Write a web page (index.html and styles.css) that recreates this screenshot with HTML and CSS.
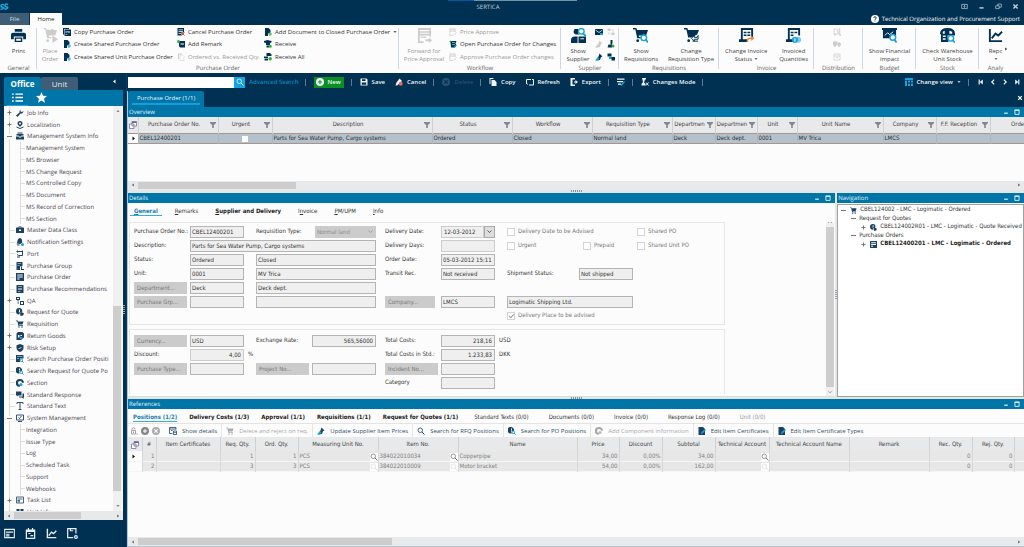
FILE: index.html
```html
<!DOCTYPE html>
<html lang="en">
<head>
    <meta charset="UTF-8">
    <meta name="viewport" content="width=device-width, initial-scale=1.0">
    <title>SERTICA</title>
    <link rel="stylesheet" href="styles.css">
</head>
<body>
    <!-- icon sprite -->
    <svg class="sprite" aria-hidden="true">
        <symbol id="logo" viewBox="0 0 18 16"><path d="M8 4Q3 2 2 5t4 4-5 4M16 3q-5-2-6 1t4 4-5 5" fill="none" stroke="#18a5d8" stroke-width="3"/></symbol>
        <symbol id="print" viewBox="0 0 16 16"><path d="M4 1h8v3H4zM2 5h12a2 2 0 0 1 2 2v5h-3V9H3v3H0V7a2 2 0 0 1 2-2z"/><path d="M4 10h8v5H4zm1.500 1.500v2h5v-2z" fill-rule="evenodd"/></symbol>
        <symbol id="cart" viewBox="0 0 16 16"><path d="M0 1h3.500l.8 2H15l-2 6H6l.4 1.500H14V12H5L2.500 2.500H0z"/><circle cx="6" cy="14" r="1.500"/><circle cx="12" cy="14" r="1.500"/></symbol>
        <symbol id="cartgo" viewBox="0 0 16 16"><path d="M0 0h3l.8 2H6v2l2 2 2-2h-1V1h2v3h-1l-2 2M13 2h2l-2 6H6l.4 1.500H9V11H4.500L2.500 1.500H0z"/><path d="M5 3h9l-1.500 4H6z"/><circle cx="5" cy="13.500" r="1.500"/><path d="M10 8l6 4-6 4z"/></symbol>
        <symbol id="copydoc" viewBox="0 0 16 16"><path d="M0 0h12v2H2v11H0z"/><path d="M3 3h13v13H3zm2 3v1h9V6zm0 3v1h4V9zm5 0v1h4V9zm-5 3v1h4v-1z" fill-rule="evenodd"/></symbol>
        <symbol id="docadd" viewBox="0 0 16 16"><path d="M2 0h7l4 4v5l-5 2v5H2z"/><path d="M9 11h2V9h2v2h3v2h-3v3h-2v-3H9z" class="acc"/></symbol>
        <symbol id="docedit" viewBox="0 0 16 16"><path d="M1 0h9l4 4v12H1z"/><path d="M6 14l1-4 7-6 2 2-7 7z" class="acc"/></symbol>
        <symbol id="doccancel" viewBox="0 0 16 16"><path d="M1 0h13v9H9v6H1zm2 3v1.500h9V3zm0 3v1.500h9V6zm0 4v1.500h5V10z" fill-rule="evenodd"/><path d="M9 9l6 6M15 9l-6 6" stroke="#e8483f" stroke-width="2"/></symbol>
        <symbol id="remark" viewBox="0 0 16 16"><path d="M4 2h12v13H6l-2-3zm3 4v1h7V6zm0 3v1h7V9z" fill-rule="evenodd"/><circle cx="3" cy="3" r="3" fill="#2fae3a"/></symbol>
        <symbol id="docs" viewBox="0 0 16 16"><path d="M2 1h8v2H4v9H2z"/><path d="M6 4h5l3 3v8H6z" fill="none" stroke="currentColor"/></symbol>
        <symbol id="docgreen" viewBox="0 0 16 16"><path d="M2 0h7l4 4v5l-5 2v5H2z"/><path d="M9 11h2V9h2v2h3v2h-3v3h-2v-3H9z" fill="#2fae3a"/></symbol>
        <symbol id="receive" viewBox="0 0 16 16"><path d="M0 2l7-2 8 2v3l-3 1v4H4V6L0 5zM5 11h5v4H5z"/><circle cx="12.500" cy="12.500" r="3" fill="#2fae3a"/></symbol>
        <symbol id="receiveall" viewBox="0 0 16 16"><path d="M5 0h7l3 3v3H5zM0 7h8v3H0zM1 11h7v4H1z"/><circle cx="12.500" cy="11.500" r="3.500" fill="#2fae3a"/></symbol>
        <symbol id="forward" viewBox="0 0 16 16"><path d="M1 0h14v9h-2V8H3v6h4v2H1zm2 2v1.500h10V2zm0 3v1h10V5z" fill-rule="evenodd"/><path d="M4 9h6v1.500H4zM9 12h4v-2l3 3-3 3v-2H9z"/></symbol>
        <symbol id="approve" viewBox="0 0 16 16"><path d="M1 1h12v8h-1.500V7h-9v7H8v1.500H1zm1.500 2v2h9V3z" fill-rule="evenodd"/><path d="M9 12l2 2 4-5" fill="none" stroke="currentColor" stroke-width="1.500"/></symbol>
        <symbol id="openchg" viewBox="0 0 16 16"><path d="M3 2h12l-2 5 2 4-3 4H4zm3 3v1h6V5zm0 3v1h6V8z" fill-rule="evenodd"/><path d="M0 4l3-3 3 3H4v3H2V4z" fill="#2fae3a"/><path d="M8 15l6-6 1 2-5 5z" class="acc"/></symbol>
        <symbol id="supplier" viewBox="0 0 16 16"><path d="M0 16v-3q0-4 4-4h3v7zM8 9h8v7H8zM4 1h4v2q-1 3 1 4H5Q1 5 4 1z"/><path d="M10 11h4v1h-4z" fill="#fff"/><circle cx="11" cy="3.500" r="3" fill="#fff" stroke="#14a3dc" stroke-width="1.500"/><path d="M13 6l3 3" stroke="#14a3dc" stroke-width="2"/></symbol>
        <symbol id="mail" viewBox="0 0 16 16"><path d="M0 2h16v12H0z"/><path d="M1 4l7 5 7-5" fill="none" stroke="#fff" stroke-width="1.500"/><path d="M10 10h6v4h-6z" class="acc"/></symbol>
        <symbol id="nodes" viewBox="0 0 16 16"><path d="M1 1h6v5H1zM9 9h6v5H9zM9 3h4v4h-1.500V4.500H9zM3 8h1.500v3H8v1.500H3z"/></symbol>
        <symbol id="tag" viewBox="0 0 16 16"><path d="M9 1l6 6-3 1-2 6-8 1 5-8z"/><path d="M0 15l6-7 3 3-3 4z" class="acc"/></symbol>
        <symbol id="person" viewBox="0 0 16 16"><path d="M7 0h4v6l-1 3H3l-2 6h9v-5l-3-2z"/><circle cx="12" cy="12" r="3" fill="#2fae3a"/></symbol>
        <symbol id="boxes" viewBox="0 0 16 16"><path d="M1 1h8v6H1z"/><path d="M4 7h6v5H4z" class="acc"/><path d="M9 8h7v7H9z"/></symbol>
        <symbol id="cartfind" viewBox="0 0 16 16"><path d="M0 0h3.500l.8 2H16l-2 6H6l.4 1.500H9V11H4.500L2.500 1.500H0z"/><circle cx="5" cy="13.500" r="1.500"/><circle cx="11.500" cy="10.500" r="3" fill="#fff" stroke="#14a3dc" stroke-width="1.500"/><path d="M13.500 12.500L16 15.500" stroke="#14a3dc" stroke-width="2"/></symbol>
        <symbol id="cartchg" viewBox="0 0 16 16"><path d="M0 0h3.500l.8 2H16l-2 5-6 3H4.500L2.500 1.500H0z"/><circle cx="5" cy="13.500" r="1.500"/><path d="M8 11l3-3v2h3l1-2v4h-4v2zM9 14h6" stroke="currentColor" fill="none"/></symbol>
        <symbol id="invoice" viewBox="0 0 16 16"><path d="M2 0h13v10h-2V2H4v10h5v3H0v-3h2z"/><path d="M5 4h3v1.500H5zm4 0h3v1.500H9zM5 7h3v1.500H5zm4 0h3v1.500H9z"/><path d="M9 15v-2q0-2 4-2h2M13 9l2.500 2L13 13" fill="none" stroke="#ee8a3c" stroke-width="1.500"/></symbol>
        <symbol id="invoiceqty" viewBox="0 0 16 16"><path d="M2 0h13v8h-2V2H4v10h4v3H0v-3h2z"/><path d="M5 4h3v1.500H5zm4 0h3v1.500H9zM5 7h3v1.500H5z"/><circle cx="13" cy="12.500" r="3.200" fill="#7ccbee"/><circle cx="9.500" cy="12.500" r="3.300" fill="#14a3dc"/><path d="M9.500 10.500v4" stroke="#fff"/></symbol>
        <symbol id="forklift" viewBox="0 0 16 16"><path d="M2 2h6l2 6v4H2zM12 1h1.500v12H16v1.500h-4z" fill="none" stroke="currentColor" stroke-width="1.500"/><circle cx="4" cy="13" r="2"/></symbol>
        <symbol id="truck" viewBox="0 0 16 16"><path d="M0 3h9v8H0zM10 5h4l2 3v3h-6z"/><circle cx="4" cy="12" r="2"/><circle cx="12" cy="12" r="2"/></symbol>
        <symbol id="crate" viewBox="0 0 16 16"><path d="M2 2h12v12H2zM2 6h12M6 9h4" fill="none" stroke="currentColor" stroke-width="1.500"/></symbol>
        <symbol id="budget" viewBox="0 0 16 16"><path d="M0 0h16v2h-1v9H1V2H0z"/><path d="M3 8l3-3 2 2 4-3" fill="none" stroke="#fff"/><circle cx="11.500" cy="10" r="3" fill="#fff" stroke="#14a3dc" stroke-width="1.500"/><path d="M13.500 12.500l2 3" stroke="#14a3dc" stroke-width="2"/></symbol>
        <symbol id="stock" viewBox="0 0 16 16"><path d="M0 6q0-6 8-6t8 6v2H8v2h1v5H1V7zm3-2v2h2V3zm7-1v3h3V4zM3 8v1.500h3V8zm0 3v1.500h3V11z" fill-rule="evenodd"/><circle cx="11.500" cy="11" r="3" fill="#fff" stroke="#14a3dc" stroke-width="1.500"/><path d="M13.500 13l2.500 2.500" stroke="#14a3dc" stroke-width="2"/></symbol>
        <symbol id="chart" viewBox="0 0 16 16"><path d="M2 1v13h13M4 11l4-5 3 2 4-4" fill="none" stroke="currentColor" stroke-width="2"/></symbol>
        <symbol id="help" viewBox="0 0 16 16"><circle cx="8" cy="8" r="8" fill="#fff"/><path d="M5.500 6q0-2.500 2.500-2.500T10.500 6q0 1.500-2.500 2.500v1M8 11v2" fill="none" stroke="#003152" stroke-width="1.800"/></symbol>
        <symbol id="find" viewBox="0 0 16 16"><circle cx="6.500" cy="6.500" r="4.500" fill="none" stroke="currentColor" stroke-width="1.600"/><path d="M10 10l5 5" stroke="currentColor" stroke-width="2"/></symbol>
        <symbol id="plusc" viewBox="0 0 16 16"><path d="M8 0a8 8 0 1 0 0 16A8 8 0 0 0 8 0zM7 4h2v3h3v2H9v3H7V9H4V7h3z" fill-rule="evenodd"/></symbol>
        <symbol id="xc" viewBox="0 0 16 16"><path d="M8 0a8 8 0 1 0 0 16A8 8 0 0 0 8 0zM5.500 4L8 6.500 10.500 4 12 5.500 9.500 8l2.500 2.500-1.500 1.500L8 9.500 5.500 12 4 10.500 6.500 8 4 5.500z" fill-rule="evenodd"/></symbol>
        <symbol id="save" viewBox="0 0 16 16"><path d="M1 1h12l2 2v12H1zm3 1.500V6h7V2.500zM3.500 9v4.500h9V9z" fill-rule="evenodd"/></symbol>
        <symbol id="cancel" viewBox="0 0 16 16"><path d="M9 1l5 5-5 5-5 4H1l2-6z"/><circle cx="11.500" cy="11.500" r="4" fill="#e8675f"/></symbol>
        <symbol id="copy" viewBox="0 0 16 16"><path d="M1 0h8v2H3v10H1z"/><path d="M5 4h6l4 4v8H5z"/></symbol>
        <symbol id="refresh" viewBox="0 0 16 16"><path d="M1 11V3h9M15 5v9H6M3 13L1 10l-1 1M12 3h3v3" fill="none" stroke="currentColor" stroke-width="2"/></symbol>
        <symbol id="export" viewBox="0 0 16 16"><path d="M1 0h9v3H5v10h5v3H1zM8 7h3V4l5 4-5 4V9H8z"/></symbol>
        <symbol id="editlist" viewBox="0 0 16 16"><path d="M0 1h15v2.500H0zm0 5h12v2.500H0zm2 5h6v2.500H2z"/><path d="M7 14l7-8 2 2-7 8z" fill="#14a3dc"/></symbol>
        <symbol id="changes" viewBox="0 0 16 16"><path d="M2 0h8v3H8L6 9l3 3v3H1v-3l3-4z"/><path d="M10 9l5 6M15 9l-5 6" stroke="currentColor" stroke-width="2"/></symbol>
        <symbol id="view" viewBox="0 0 16 16"><path d="M0 0h16v4H0zM0 5h4v11H0zM6 5h4v4H6zm6 0h4v4h-4zM6 11h4v5H6zm6 0h4v5h-4z" fill="#14a3dc"/></symbol>
        <symbol id="first" viewBox="0 0 10 10"><path d="M1 1h2v8H1zM8 1v8L3 5z"/></symbol>
        <symbol id="prev" viewBox="0 0 10 10"><path d="M7 1L3 5l4 4" fill="none" stroke="currentColor" stroke-width="2"/></symbol>
        <symbol id="next" viewBox="0 0 10 10"><path d="M3 1l4 4-4 4" fill="none" stroke="currentColor" stroke-width="2"/></symbol>
        <symbol id="last" viewBox="0 0 10 10"><path d="M7 1h2v8H7zM2 1v8l5-4z"/></symbol>
        <symbol id="dock" viewBox="0 0 10 10"><path d="M1 2h8v6H1zM5 7V4M3.500 5L5 3.500 6.500 5" fill="none" stroke="currentColor"/></symbol>
        <symbol id="min" viewBox="0 0 10 10"><path d="M2 7h6" stroke="currentColor" stroke-width="2"/></symbol>
        <symbol id="max" viewBox="0 0 10 10"><path d="M1.500 2h7v7h-7z" fill="none" stroke="currentColor" stroke-width="1.500"/><path d="M1 1h8v2H1z"/></symbol>
        <symbol id="restore" viewBox="0 0 10 10"><path d="M1 4h5v4H1zM4 4V1.500h5V6H6" fill="none" stroke="currentColor"/></symbol>
        <symbol id="close" viewBox="0 0 10 10"><path d="M2 2l6 6M8 2L2 8" stroke="currentColor" stroke-width="2"/></symbol>
        <symbol id="left" viewBox="0 0 10 10"><path d="M7 1v8L2 5z"/></symbol>
        <symbol id="right" viewBox="0 0 10 10"><path d="M3 1v8l5-4z"/></symbol>
        <symbol id="up" viewBox="0 0 10 10"><path d="M1 7h8L5 3z"/></symbol>
        <symbol id="down" viewBox="0 0 10 10"><path d="M1 3h8L5 7z"/></symbol>
        <symbol id="chevup" viewBox="0 0 10 10"><path d="M1 7l4-4 4 4" fill="none" stroke="currentColor" stroke-width="2"/></symbol>
        <symbol id="chev" viewBox="0 0 10 10"><path d="M1 3l4 4 4-4" fill="none" stroke="currentColor" stroke-width="1.500"/></symbol>
        <symbol id="plus" viewBox="0 0 10 10"><path d="M5 1v8M1 5h8" stroke="currentColor" stroke-width="2"/></symbol>
        <symbol id="minus" viewBox="0 0 10 10"><path d="M0 5h10" stroke="currentColor" stroke-width="2"/></symbol>
        <symbol id="funnel" viewBox="0 0 10 10"><path d="M0 0h10v1.500L6.300 5.500V10H3.700V5.500L0 1.500z"/></symbol>
        <symbol id="fields" viewBox="0 0 16 16"><path d="M6 1h9v9H6zM1 6h9v9H1z" fill="#fff" stroke="#6b6b9a" stroke-width="1.500"/><path d="M6 1h9v3H6z" fill="#6b6b9a"/></symbol>
        <symbol id="list" viewBox="0 0 16 16"><path d="M0 2h2.500v2H0zm5 0h11v2H5zM0 7h2.500v2H0zm5 0h11v2H5zm-5 5h2.500v2H0zm5 0h11v2H5z"/></symbol>
        <symbol id="star" viewBox="0 0 16 16"><path d="M8 0l2.300 5.400 5.700.5-4.300 3.800L13 15.500 8 12.400 3 15.500l1.300-5.800L0 5.900l5.700-.5z"/></symbol>
        <symbol id="wrench" viewBox="0 0 16 16"><path d="M10 1a5 5 0 0 0-3 6l-7 6 3 3 6-7a5 5 0 0 0 6-5l-3 2-3-1 0-3z"/></symbol>
        <symbol id="pin" viewBox="0 0 16 16"><path d="M8 0a5 5 0 0 1 5 5c0 3-3 4-5 7-2-3-5-4-5-7a5 5 0 0 1 5-5zm0 3a2 2 0 1 0 0 4 2 2 0 0 0 0-4z" fill-rule="evenodd"/><path d="M1 12q7 6 14 0" fill="none" stroke="currentColor" stroke-width="2"/></symbol>
        <symbol id="tray" viewBox="0 0 16 16"><path d="M3 1h10v2H3zM1 4h14v3h-4l-1 2H6L5 7H1zM0 9h5l1 2h4l1-2h5v6H0z"/></symbol>
        <symbol id="case" viewBox="0 0 16 16"><path d="M5 3V1h6v2h4a1 1 0 0 1 1 1v10H0V4a1 1 0 0 1 1-1zm1.500 0h3v-.8h-3zM6 7v3h4V7z" fill-rule="evenodd"/></symbol>
        <symbol id="bell" viewBox="0 0 16 16"><path d="M8 0q5 1 4 7l1 2-5 3-7-1q2-2 2-6 1-5 5-5zM1 13h6v2H3z"/><circle cx="13" cy="13" r="3" class="acc"/></symbol>
        <symbol id="port" viewBox="0 0 16 16"><path d="M1 3h12v8H5l-3-2M3 1v4M13 1v4M2 14h6" fill="none" stroke="currentColor" stroke-width="2"/></symbol>
        <symbol id="pgroup" viewBox="0 0 16 16"><path d="M1 0h12v8L8 9v7H1zm2 3v1h7V3zm0 3v1h4V6z" fill-rule="evenodd"/><path d="M10 9h2v5h4v2h-6z"/></symbol>
        <symbol id="order" viewBox="0 0 16 16"><path d="M0 0h16v16H0zm2.500 3v2h11V3zm0 4v2h11V7zm0 4v2H7v-2z" fill-rule="evenodd"/></symbol>
        <symbol id="page" viewBox="0 0 16 16"><path d="M1 0h14v16H1zm3 3v1h8V3zm0 3v1h8V6zm0 3v1h8V9zm0 3v1h5v-1z" fill-rule="evenodd"/></symbol>
        <symbol id="qa" viewBox="0 0 16 16"><path d="M0 0h8v6H5v3H3V6H0zm2 2v2h4V2zM8 8h8v8H8zm2 2v4h4v-4z" fill-rule="evenodd"/><path d="M3 11h3v2H3z"/></symbol>
        <symbol id="quote" viewBox="0 0 16 16"><path d="M6.500 0a6.500 6.500 0 1 0 0 13l1-2-1-2h4l2-2A6.500 6.500 0 0 0 6.500 0zM6 3h2v5H6z" fill-rule="evenodd"/><path d="M8 10l3-2 5 3-2 4-5 1z"/></symbol>
        <symbol id="returns" viewBox="0 0 16 16"><path d="M1 3l3-3h9l3 3v8l-6 5H1zm3 3v5h3V6zm5 0v2h3V6z" fill-rule="evenodd"/><circle cx="10" cy="12" r="2.500" class="acc"/></symbol>
        <symbol id="shield" viewBox="0 0 16 16"><path d="M8 0l7 2.500V8q0 5-7 8-7-3-7-8V2.500z"/><path d="M5 8l2 2 4-4" fill="none" stroke="#fff" stroke-width="1.500"/></symbol>
        <symbol id="pofind" viewBox="0 0 16 16"><path d="M0 0h15v7H8v7H0zm2 3v1h11V3zm0 4v1h4V7z" fill-rule="evenodd"/><circle cx="10.500" cy="10.500" r="2.500" fill="none" class="ring"/><path d="M12 12l3 3" class="ring"/></symbol>
        <symbol id="quotefind" viewBox="0 0 16 16"><path d="M6.500 0a6.500 6.500 0 1 0 1 12.500L6 8h6A6.500 6.500 0 0 0 6.500 0zM6 3h2v4H6z" fill-rule="evenodd"/><circle cx="10.500" cy="10.500" r="2.500" fill="none" class="ring"/><path d="M12 12l3 3" class="ring"/></symbol>
        <symbol id="section" viewBox="0 0 16 16"><path d="M8 0a8 8 0 0 1 8 7l-4 1a4 4 0 1 0-4 4l-1 4A8 8 0 0 1 8 0z"/><circle cx="10" cy="11" r="3" class="acc"/></symbol>
        <symbol id="chat" viewBox="0 0 16 16"><path d="M0 1h11v8H4l-2 2V9H0zM13 5h3v8h-1v3l-3-3H6v-2h7z"/></symbol>
        <symbol id="tee" viewBox="0 0 16 16"><path d="M2 4V1h12v3M8 1v14M5 15h6" fill="none" stroke="currentColor" stroke-width="1.800"/></symbol>
        <symbol id="monitor" viewBox="0 0 16 16"><path d="M1 2h14v10H1zM4 15h8M5 7l2 2 4-5" fill="none" stroke="currentColor" stroke-width="1.800"/></symbol>
        <symbol id="tasks" viewBox="0 0 16 16"><path d="M1 2h14v12H1zM3 6h10M3 9h5M3 11.500h5" fill="none" stroke="currentColor" stroke-width="1.600"/></symbol>
        <symbol id="units" viewBox="0 0 16 16"><path d="M1 2h6v5H1zm8 0h6v5H9zM0 9h7v6H0zm9 0h7v6H9z"/></symbol>
        <symbol id="calendar" viewBox="0 0 16 16"><path d="M2 3h12v12H2zM2 5h12M5 0v4M11 0v4M5 8h3M8 11h4" fill="none" stroke="currentColor" stroke-width="1.800"/></symbol>
        <symbol id="formset" viewBox="0 0 16 16"><path d="M13 8V1H1v13h8M5 1v3h4" fill="none" stroke="currentColor" stroke-width="1.800"/><circle cx="13" cy="13" r="2" fill="none" stroke="currentColor" stroke-width="1.800"/></symbol>
        <symbol id="lock" viewBox="0 0 16 16"><path d="M4 6V3q3-3 6 0v2M3 7h8v7H3zM7 9v3" fill="none" stroke="currentColor" stroke-width="1.500"/><path d="M13 13h2v2h-2z"/></symbol>
        <symbol id="details" viewBox="0 0 16 16"><path d="M1 1h13v4M1 1v12h6M1 4h13M4 7h3M9 8h6v7H9zM10.500 11h3" fill="none" stroke="currentColor" stroke-width="1.600"/></symbol>
    </svg>

    <header class="titlebar">
        <svg class="logo"><use href="#logo"/></svg>
        <span class="app-name">SERTICA</span>
        <div class="win-buttons">
            <button aria-label="Ribbon options"><svg><use href="#dock"/></svg></button>
            <button aria-label="Minimize"><svg><use href="#min"/></svg></button>
            <button aria-label="Restore"><svg><use href="#restore"/></svg></button>
            <button aria-label="Close"><svg><use href="#close"/></svg></button>
        </div>
    </header>
    <div class="ribbon-tabs">
        <button class="ribbon-tab">File</button>
        <button class="ribbon-tab active">Home</button>
        <a class="support" href="#"><svg><use href="#help"/></svg>Technical Organization and Procurement Support</a>
    </div>

    <section class="ribbon">
        <div class="group g-general">
            <div class="items">
                <button class="big"><svg><use href="#print"/></svg>Print</button>
            </div>
            <p>General</p>
        </div>
        <div class="group g-order">
            <div class="items">
                <button class="big" disabled><svg><use href="#cartgo"/></svg>Place<br>Order</button>
                <div class="small-col">
                    <button><svg><use href="#copydoc"/></svg>Copy Purchase Order</button>
                    <button><svg><use href="#docadd"/></svg>Create Shared Purchase Order</button>
                    <button><svg><use href="#docadd"/></svg>Create Shared Unit Purchase Order</button>
                </div>
                <div class="small-col">
                    <button><svg><use href="#doccancel"/></svg>Cancel Purchase Order</button>
                    <button><svg><use href="#remark"/></svg>Add Remark</button>
                    <button disabled><svg><use href="#docs"/></svg>Ordered vs. Received Qty.</button>
                </div>
                <div class="small-col">
                    <button><svg><use href="#docgreen"/></svg>Add Document to Closed Purchase Order <svg class="caret"><use href="#down"/></svg></button>
                    <button><svg><use href="#receive"/></svg>Receive</button>
                    <button><svg><use href="#receiveall"/></svg>Receive All</button>
                </div>
            </div>
            <p>Purchase Order</p>
        </div>
        <div class="group g-workflow">
            <div class="items">
                <button class="big" disabled><svg><use href="#forward"/></svg>Forward for<br>Price Approval</button>
                <div class="small-col">
                    <button disabled><svg><use href="#approve"/></svg>Price Approve</button>
                    <button><svg><use href="#openchg"/></svg>Open Purchase Order for Changes</button>
                    <button disabled><svg><use href="#approve"/></svg>Approve Purchase Order changes</button>
                </div>
            </div>
            <p>Workflow</p>
        </div>
        <div class="group g-supplier">
            <div class="items">
                <button class="big"><svg><use href="#supplier"/></svg>Show<br>Supplier</button>
                <div class="small-col icons">
                    <button aria-label="Mail supplier"><svg><use href="#mail"/></svg></button>
                    <button aria-label="Tag supplier" disabled><svg><use href="#tag"/></svg></button>
                    <button aria-label="Update prices"><svg><use href="#tag"/></svg></button>
                </div>
                <div class="small-col icons">
                    <button aria-label="Supplier tree" disabled><svg><use href="#nodes"/></svg></button>
                    <button aria-label="Supplier contact"><svg><use href="#person"/></svg></button>
                    <button aria-label="Supplier items"><svg><use href="#boxes"/></svg></button>
                </div>
            </div>
            <p>Supplier</p>
        </div>
        <div class="group g-requisitions">
            <div class="items">
                <button class="big"><svg><use href="#cartfind"/></svg>Show<br>Requisitions</button>
                <button class="big"><svg><use href="#cartchg"/></svg>Change<br>Requisition Type</button>
            </div>
            <p>Requisitions</p>
        </div>
        <div class="group g-invoice">
            <div class="items">
                <button class="big"><svg><use href="#invoice"/></svg>Change Invoice<br>Status <svg class="caret"><use href="#down"/></svg></button>
                <button class="big"><svg><use href="#invoiceqty"/></svg>Invoiced<br>Quantities</button>
            </div>
            <p>Invoice</p>
        </div>
        <div class="group g-distribution">
            <div class="items">
                <div class="small-col icons">
                    <button aria-label="Load" disabled><svg><use href="#forklift"/></svg></button>
                    <button aria-label="Ship" disabled><svg><use href="#truck"/></svg></button>
                    <button aria-label="Store" disabled><svg><use href="#crate"/></svg></button>
                </div>
            </div>
            <p>Distribution</p>
        </div>
        <div class="group g-budget">
            <div class="items">
                <button class="big"><svg><use href="#budget"/></svg>Show Financial<br>impact</button>
            </div>
            <p>Budget</p>
        </div>
        <div class="group g-stock">
            <div class="items">
                <button class="big"><svg><use href="#stock"/></svg>Check Warehouse<br>Unit Stock</button>
            </div>
            <p>Stock</p>
        </div>
        <div class="group g-analysis">
            <div class="items">
                <button class="big"><svg><use href="#chart"/></svg>Repc<br><svg class="caret"><use href="#down"/></svg></button>
            </div>
            <p>Analy</p>
        </div>
        <button class="ribbon-more" aria-label="Scroll ribbon"><svg><use href="#right"/></svg></button>
    </section>

    <div class="workspace">
        <aside class="sidebar">
            <div class="side-tabs">
                <button class="side-tab active">Office</button>
                <button class="side-tab">Unit</button>
                <button class="collapse" aria-label="Collapse"><svg><use href="#left"/></svg></button>
            </div>
            <div class="side-modes">
                <button class="active" aria-label="List"><svg><use href="#list"/></svg></button>
                <button aria-label="Favorites"><svg><use href="#star"/></svg></button>
            </div>
            <div class="tree-box">
                <ul class="tree">
                    <li><svg class="tog"><use href="#plus"/></svg><svg><use href="#wrench"/></svg>Job Info</li>
                    <li><svg class="tog"><use href="#plus"/></svg><svg><use href="#pin"/></svg>Localization</li>
                    <li><svg class="tog"><use href="#minus"/></svg><svg><use href="#tray"/></svg>Management System Info</li>
                    <li class="sub">Management System</li>
                    <li class="sub">MS Browser</li>
                    <li class="sub">MS Change Request</li>
                    <li class="sub">MS Controlled Copy</li>
                    <li class="sub">MS Document</li>
                    <li class="sub">MS Record of Correction</li>
                    <li class="sub">MS Section</li>
                    <li><i></i><svg><use href="#case"/></svg>Master Data Class</li>
                    <li><i></i><svg><use href="#bell"/></svg>Notification Settings</li>
                    <li><i></i><svg><use href="#port"/></svg>Port</li>
                    <li><i></i><svg><use href="#pgroup"/></svg>Purchase Group</li>
                    <li><i></i><svg><use href="#order"/></svg>Purchase Order</li>
                    <li><i></i><svg><use href="#page"/></svg>Purchase Recommendations</li>
                    <li><svg class="tog"><use href="#plus"/></svg><svg><use href="#qa"/></svg>QA</li>
                    <li><i></i><svg><use href="#quote"/></svg>Request for Quote</li>
                    <li><i></i><svg><use href="#cart"/></svg>Requisition</li>
                    <li><svg class="tog"><use href="#plus"/></svg><svg><use href="#returns"/></svg>Return Goods</li>
                    <li><svg class="tog"><use href="#plus"/></svg><svg><use href="#shield"/></svg>Risk Setup</li>
                    <li><i></i><svg><use href="#pofind"/></svg>Search Purchase Order Positi</li>
                    <li><i></i><svg><use href="#quotefind"/></svg>Search Request for Quote Po</li>
                    <li><i></i><svg><use href="#section"/></svg>Section</li>
                    <li><i></i><svg><use href="#chat"/></svg>Standard Response</li>
                    <li><i></i><svg><use href="#tee"/></svg>Standard Text</li>
                    <li><svg class="tog"><use href="#minus"/></svg><svg><use href="#monitor"/></svg>System Management</li>
                    <li class="sub">Integration</li>
                    <li class="sub">Issue Type</li>
                    <li class="sub">Log</li>
                    <li class="sub">Scheduled Task</li>
                    <li class="sub">Support</li>
                    <li class="sub">Webhooks</li>
                    <li><svg class="tog"><use href="#plus"/></svg><svg><use href="#tasks"/></svg>Task List</li>
                    <li><svg class="tog"><use href="#plus"/></svg><svg><use href="#units"/></svg>Unit Info</li>
                </ul>
                <div class="vscroll side-v"><svg><use href="#up"/></svg><div class="track"><div class="thumb"></div></div><svg><use href="#down"/></svg></div>
            </div>
            <div class="hscroll side-h"><svg><use href="#left"/></svg><div class="track"><div class="thumb"></div></div><svg><use href="#right"/></svg></div>
            <nav class="side-icons">
                <button aria-label="Tasks"><svg><use href="#tasks"/></svg></button>
                <button aria-label="Calendar"><svg><use href="#calendar"/></svg></button>
                <button aria-label="Charts"><svg><use href="#chart"/></svg></button>
                <button aria-label="Settings"><svg><use href="#formset"/></svg></button>
            </nav>
        </aside>
        <div class="split-v dark"><span></span></div>

        <main class="main">
            <div class="toolbar">
                <form class="search">
                    <input type="text" aria-label="Search">
                    <button type="button" aria-label="Search"><svg><use href="#find"/></svg></button>
                </form>
                <a class="advanced" href="#">Advanced Search</a>
                <span class="sep"></span>
                <button class="new"><svg><use href="#plusc"/></svg>New</button>
                <span class="sep"></span>
                <button><svg><use href="#save"/></svg>Save</button>
                <button><svg><use href="#cancel"/></svg>Cancel</button>
                <span class="sep"></span>
                <button disabled><svg><use href="#xc"/></svg>Delete</button>
                <span class="sep"></span>
                <button><svg><use href="#copy"/></svg>Copy</button>
                <button><svg><use href="#refresh"/></svg>Refresh</button>
                <button><svg><use href="#export"/></svg>Export</button>
                <span class="sep"></span>
                <button class="icon-only" aria-label="Edit list"><svg><use href="#editlist"/></svg></button>
                <span class="sep"></span>
                <button><svg><use href="#changes"/></svg>Changes Mode</button>
                <span class="sep"></span>
                <button class="view"><svg><use href="#view"/></svg>Change view<svg class="caret"><use href="#down"/></svg></button>
                <span class="sep"></span>
                <div class="pager">
                    <button aria-label="First"><svg><use href="#first"/></svg></button>
                    <button aria-label="Previous"><svg><use href="#prev"/></svg></button>
                    <button aria-label="Next"><svg><use href="#next"/></svg></button>
                    <button aria-label="Last"><svg><use href="#last"/></svg></button>
                </div>
            </div>
            <div class="doc-tabs">
                <button class="doc-tab"><span>Purchase Order (1/1)</span></button>
                <button class="doc-close" aria-label="Close tab"><svg><use href="#close"/></svg></button>
            </div>

            <section class="panel overview">
                <h2>Overview<svg><use href="#min"/></svg><svg><use href="#max"/></svg></h2>
                <div class="grid-wrap">
                    <table class="grid over-grid">
                        <colgroup><col class="w10"><col class="w80"><col class="w54"><col class="w160"><col class="w80"><col class="w80"><col class="w80"><col class="w43"><col class="w42"><col class="w40"><col class="w86"><col class="w53"><col class="w54"><col class="w80"></colgroup>
                        <thead>
                            <tr>
                                <th><svg class="fields"><use href="#fields"/></svg></th>
                                <th><div>Purchase Order No.</div></th>
                                <th><div>Urgent</div></th>
                                <th><div>Description</div></th>
                                <th><div>Status</div></th>
                                <th><div>Workflow</div></th>
                                <th><div>Requisition Type</div></th>
                                <th><div>Departmen</div></th>
                                <th><div>Departmen</div></th>
                                <th><div>Unit</div></th>
                                <th><div>Unit Name</div></th>
                                <th><div>Company</div></th>
                                <th><div>F.F. Reception</div></th>
                                <th><div>Order Date</div></th>
                            </tr>
                        </thead>
                        <tbody>
                            <tr>
                                <td class="marker"><svg><use href="#right"/></svg></td>
                                <td>CBEL12400201</td>
                                <td class="mid"><input type="checkbox" aria-label="Urgent"></td>
                                <td>Parts for Sea Water Pump, Cargo systems</td>
                                <td>Ordered</td>
                                <td>Closed</td>
                                <td>Normal land</td>
                                <td>Deck</td>
                                <td>Deck dept.</td>
                                <td>0001</td>
                                <td>MV Trica</td>
                                <td>LMCS</td>
                                <td></td>
                                <td></td>
                            </tr>
                        </tbody>
                    </table>
                </div>
                <div class="hscroll over-h"><svg><use href="#left"/></svg><div class="track"><div class="thumb"></div></div><svg><use href="#right"/></svg></div>
                <div class="split-h"><span></span></div>
            </section>

            <div class="middle">
                <section class="panel details">
                    <h2>Details<svg><use href="#min"/></svg><svg><use href="#max"/></svg></h2>
                    <div class="tabs detail-tabs">
                        <button class="active"><u>G</u>eneral</button>
                        <button><u>R</u>emarks</button>
                        <button class="strong"><u>S</u>upplier and Delivery</button>
                        <button>I<u>n</u>voice</button>
                        <button><u>P</u>M/UPM</button>
                        <button><u>I</u>nfo</button>
                    </div>
                    <div class="form-area">
                        <form class="form">
                            <div class="box">
                                <label for="po">Purchase Order No.:</label>
                                <input id="po" value="CBEL12400201" readonly>
                                <label class="c3" for="rt">Requisition Type:</label>
                                <div class="pick"><select id="rt" disabled><option>Normal land</option></select><svg><use href="#chev"/></svg></div>
                                <label class="c5" for="dd">Delivery Date:</label>
                                <div class="date"><input id="dd" value="12-03-2012" readonly><button type="button" aria-label="Pick date"><svg><use href="#chev"/></svg></button></div>
                                <label class="check c7 wide"><input type="checkbox" disabled>Delivery Date to be Advised</label>
                                <label class="check c9"><input type="checkbox" disabled>Shared PO</label>

                                <label class="c1" for="desc">Description:</label>
                                <input id="desc" class="long" value="Parts for Sea Water Pump, Cargo systems" readonly>
                                <label class="c5" for="days">Delivery Days:</label>
                                <input id="days" class="soft" readonly>
                                <label class="check c7"><input type="checkbox" disabled>Urgent</label>
                                <label class="check c8"><input type="checkbox" disabled>Prepaid</label>
                                <label class="check c9"><input type="checkbox" disabled>Shared Unit PO</label>

                                <label class="c1" for="st">Status:</label>
                                <input id="st" value="Ordered" readonly>
                                <input class="c3 span2" aria-label="Workflow" value="Closed" readonly>
                                <label class="c5" for="od">Order Date:</label>
                                <input id="od" value="05-03-2012 15:11" readonly>

                                <label class="c1" for="un">Unit:</label>
                                <input id="un" value="0001" readonly>
                                <input class="c3 span2" aria-label="Unit name" value="MV Trica" readonly>
                                <label class="c5" for="tr">Transit Rec.</label>
                                <input id="tr" value="Not received" readonly>
                                <label class="c7" for="ss">Shipment Status:</label>
                                <input id="ss" value="Not shipped" readonly>

                                <button type="button" class="c1" disabled>Department...</button>
                                <input aria-label="Department" value="Deck" readonly>
                                <input class="c3 span2" aria-label="Department name" value="Deck dept." readonly>

                                <button type="button" class="c1" disabled>Purchase Grp...</button>
                                <input aria-label="Purchase group" readonly>
                                <input class="c3 span2" aria-label="Purchase group name" readonly>
                                <button type="button" class="c5 short" disabled>Company...</button>
                                <input aria-label="Company" value="LMCS" readonly>
                                <input class="c7 span2" aria-label="Company name" value="Logimatic Shipping Ltd." readonly>

                                <label class="check c7 wide"><input type="checkbox" checked disabled>Delivery Place to be advised</label>
                            </div>
                            <div class="box costs">
                                <button type="button" class="c1" disabled>Currency...</button>
                                <input aria-label="Currency" value="USD" readonly>
                                <label class="c3" for="er">Exchange Rate:</label>
                                <input id="er" class="num" value="565,56000" readonly>
                                <label class="c5" for="tc">Total Costs:</label>
                                <input id="tc" class="num" value="218,16" readonly>
                                <span class="after">USD</span>

                                <label class="c1" for="dc">Discount:</label>
                                <input id="dc" class="num soft" value="4,00" readonly>
                                <span class="after">%</span>
                                <label class="c5" for="ts">Total Costs in Std.:</label>
                                <input id="ts" class="num" value="1.233,83" readonly>
                                <span class="after">DKK</span>

                                <button type="button" class="c1" disabled>Purchase Type...</button>
                                <input aria-label="Purchase type" readonly>
                                <button type="button" class="c3" disabled>Project No...</button>
                                <input aria-label="Project number" readonly>
                                <button type="button" class="c5" disabled>Incident No...</button>
                                <input aria-label="Incident number" readonly>

                                <label class="c5" for="cat">Category</label>
                                <input id="cat" readonly>
                            </div>
                        </form>
                        <div class="vscroll form-v"><svg><use href="#chevup"/></svg><div class="track"><div class="thumb"></div></div><svg><use href="#chev"/></svg></div>
                    </div>
                </section>
                <div class="split-v"><span></span></div>
                <section class="panel navigation">
                    <h2>Navigation<svg><use href="#min"/></svg><svg><use href="#max"/></svg></h2>
                    <div class="nav-box">
                        <ul class="nav-tree">
                            <li><svg class="tog"><use href="#minus"/></svg><svg><use href="#cart"/></svg>CBEL124002 - LMC - Logimatic - Ordered</li>
                            <li class="l2"><svg class="tog"><use href="#minus"/></svg>Request for Quotes</li>
                            <li class="l3"><svg class="tog"><use href="#plus"/></svg><svg><use href="#quote"/></svg>CBEL124002R01 - LMC - Logimatic - Quote Received</li>
                            <li class="l2"><svg class="tog"><use href="#minus"/></svg>Purchase Orders</li>
                            <li class="l3 strong"><svg class="tog"><use href="#plus"/></svg><svg><use href="#order"/></svg>CBEL12400201 - LMC - Logimatic - Ordered</li>
                        </ul>
                    </div>
                </section>
            </div>
            <div class="split-h thin"><span></span></div>

            <section class="panel references">
                <h2>References<svg><use href="#min"/></svg><svg><use href="#max"/></svg></h2>
                <div class="tabs ref-tabs">
                    <button class="active strong">Positions (1/2)</button>
                    <button class="strong">Delivery Costs (1/3)</button>
                    <button class="strong">Approval (1/1)</button>
                    <button class="strong">Requisitions (1/1)</button>
                    <button class="strong">Request for Quotes (1/1)</button>
                    <button>Standard Texts (0/0)</button>
                    <button>Documents (0/0)</button>
                    <button>Invoice (0/0)</button>
                    <button>Response Log (0/0)</button>
                    <button disabled>Unit (0/0)</button>
                </div>
                <div class="ref-tools">
                    <div class="mini">
                        <button aria-label="Lock"><svg><use href="#lock"/></svg></button>
                        <button aria-label="Add"><svg><use href="#plusc"/></svg></button>
                        <button aria-label="Remove" class="faint"><svg><use href="#xc"/></svg></button>
                    </div>
                    <button><svg><use href="#details"/></svg>Show details</button>
                    <button disabled><svg><use href="#cart"/></svg>Delete and reject on req.</button>
                    <button><svg><use href="#tag"/></svg>Update Supplier Item Prices</button>
                    <button><svg><use href="#find"/></svg>Search for RFQ Positions</button>
                    <button><svg><use href="#quotefind"/></svg>Search for PO Positions</button>
                    <button disabled><svg><use href="#section"/></svg>Add Component information</button>
                    <button><svg><use href="#docedit"/></svg>Edit Item Certificates</button>
                    <button><svg><use href="#docedit"/></svg>Edit Item Certificate Types</button>
                </div>
                <div class="grid-wrap">
                    <table class="grid ref-grid">
                        <colgroup><col class="w14"><col class="w14"><col class="w64"><col class="w35"><col class="w43"><col class="w80"><col class="w80"><col class="w119"><col class="w42"><col class="w43"><col class="w53"><col class="w54"><col class="w80"><col class="w80"><col class="w43"><col class="w42"><col class="w35"></colgroup>
                        <thead>
                            <tr>
                                <th><svg class="fields"><use href="#fields"/></svg></th>
                                <th>#</th>
                                <th>Item Certificates</th>
                                <th>Req. Qty.</th>
                                <th>Ord. Qty.</th>
                                <th>Measuring Unit No.</th>
                                <th>Item No.</th>
                                <th>Name</th>
                                <th>Price</th>
                                <th>Discount</th>
                                <th>Subtotal</th>
                                <th>Technical Account</th>
                                <th>Technical Account Name</th>
                                <th>Remark</th>
                                <th>Rec. Qty.</th>
                                <th>Rej. Qty.</th>
                                <th></th>
                            </tr>
                        </thead>
                        <tbody>
                            <tr>
                                <td class="marker"><svg><use href="#right"/></svg></td>
                                <td class="num">1</td>
                                <td></td>
                                <td class="num">1</td>
                                <td class="num">1</td>
                                <td class="look"><div>PCS<button aria-label="Look up unit"><svg><use href="#find"/></svg></button></div></td>
                                <td class="look"><div>384022010034<button aria-label="Look up item"><svg><use href="#find"/></svg></button></div></td>
                                <td>Copperpipe</td>
                                <td class="num">34,00</td>
                                <td class="num">0,00%</td>
                                <td class="num">34,00</td>
                                <td class="look"><div><button aria-label="Look up account"><svg><use href="#find"/></svg></button></div></td>
                                <td></td>
                                <td></td>
                                <td class="num">0</td>
                                <td class="num">0</td>
                                <td></td>
                            </tr>
                            <tr>
                                <td class="marker"></td>
                                <td class="num">2</td>
                                <td></td>
                                <td class="num">3</td>
                                <td class="num">3</td>
                                <td class="look"><div>PCS<button aria-label="Look up unit" disabled><svg><use href="#find"/></svg></button></div></td>
                                <td class="look"><div>384022010009<button aria-label="Look up item" disabled><svg><use href="#find"/></svg></button></div></td>
                                <td>Motor bracket</td>
                                <td class="num">54,00</td>
                                <td class="num">0,00%</td>
                                <td class="num">162,00</td>
                                <td class="look"><div><button aria-label="Look up account" disabled><svg><use href="#find"/></svg></button></div></td>
                                <td></td>
                                <td></td>
                                <td class="num">0</td>
                                <td class="num">0</td>
                                <td></td>
                            </tr>
                        </tbody>
                    </table>
                </div>
                <div class="hscroll ref-h"><svg><use href="#left"/></svg><div class="track"><div class="thumb"></div></div><svg><use href="#right"/></svg></div>
            </section>
        </main>
    </div>

    <script>
        // every filterable column gets a funnel at the right edge of its header
        document.querySelectorAll(".over-grid th div").forEach((cell) => {
            cell.innerHTML = `<span>${cell.textContent}</span><svg><use href="#funnel"/></svg>`;
        });
    </script>
</body>
</html>
```
FILE: styles.css
```css
* {
    box-sizing: border-box;
}
:root {
    --navy: #003152;
    --blue: #0075a8;
    --acc: #14a3dc;
}
body {
    margin: 0;
    height: 100vh;
    display: flex;
    flex-direction: column;
    overflow: hidden;
    background: var(--navy);
    color: #333;
    font-family: "Open Sans", "Noto Sans", sans-serif;
    font-size: 6px;
    line-height: 8px;
    text-rendering: geometricPrecision;
}
button, input, select {
    font: inherit;
    color: inherit;
    margin: 0;
    padding: 0;
    border: 0;
    background: none;
    min-width: 0;
    border-radius: 0;
}
a {
    color: inherit;
    text-decoration: none;
}
ul, p, h2 {
    margin: 0;
    padding: 0;
    list-style: none;
}
svg {
    width: 8px;
    height: 8px;
    fill: currentColor;
    flex: none;
}
.sprite {
    display: none;
}
.acc {
    fill: var(--acc);
}
.ring {
    stroke: var(--acc);
    stroke-width: 2px;
}
svg.caret {
    width: 4px;
    height: 4px;
}

/* title bar */
.titlebar {
    display: grid;
    grid-template-columns: 1fr auto 1fr;
    align-items: center;
    height: 13px;
    color: #c3d0da;
    background: linear-gradient(90deg, #0058a8 26px, #6f93a6 26px) no-repeat center top / 129px 1px;
}
.logo {
    width: 9px;
}
.app-name {
    margin-right: 48px;
}
.win-buttons {
    display: flex;
    justify-content: flex-end;
    gap: 10px;
    padding-right: 5px;
}
.win-buttons button {
    display: flex;
}
.win-buttons svg {
    width: 7px;
    height: 7px;
}
.ribbon-tabs {
    display: flex;
    height: 12px;
    gap: 1px;
}
.ribbon-tab {
    width: 29px;
    background: #3f5d76;
    color: #d6dfe6;
}
.ribbon-tab.active {
    width: 32px;
    background: #fcfcfc;
    color: #222;
}
.support {
    display: flex;
    align-items: center;
    gap: 3px;
    margin-left: auto;
    padding-right: 4px;
    color: #f2f5f7;
}

/* ribbon */
.ribbon {
    display: flex;
    height: 48px;
    background: #fcfcfc;
    flex: none;
    overflow: hidden;
}
.group {
    display: flex;
    flex-direction: column;
    flex: none;
    position: relative;
    padding-top: 1px;
}
.group::after {
    content: "";
    position: absolute;
    top: 3px;
    bottom: 4px;
    right: 0;
    width: 1px;
    background: #ccd6e6;
}
.g-analysis::after {
    display: none;
}
.group p {
    line-height: 10px;
    text-align: center;
    color: #666;
}
.items {
    flex: 1;
    display: flex;
    justify-content: center;
}
.g-general { width: 37px; }
.g-order { width: 362px; }
.g-workflow { width: 162px; }
.g-supplier { width: 58px; }
.g-requisitions { width: 100px; }
.g-invoice { width: 95px; }
.g-distribution { width: 49px; }
.g-budget { width: 53px; }
.g-stock { width: 63px; }
.g-analysis { width: 33px; }
.big {
    flex: 1 1 auto;
    padding-top: 2px;
    align-self: start;
    white-space: nowrap;
    color: #444;
}
.big > svg:first-child {
    display: block;
    width: 15px;
    height: 15px;
    margin: 0 auto 4px;
    color: var(--navy);
}
.g-order .big {
    flex: 0 0 26px;
}
.g-workflow .big {
    flex: 0 0 50px;
}
.small-col {
    display: grid;
    grid-template-rows: repeat(3, 1fr);
    flex: 0 0 auto;
    color: #333;
}
.g-order .small-col {
    width: 114px;
}
.g-order .small-col:nth-child(3) {
    width: 87px;
}
.g-order .small-col:last-child,
.g-workflow .small-col {
    flex: 1;
    width: auto;
}
.small-col button {
    display: flex;
    align-items: center;
    gap: 3px;
    white-space: nowrap;
}
.small-col svg:first-child {
    color: var(--navy);
}
.small-col.icons {
    flex: 0 0 12px;
}
.ribbon button:disabled {
    color: #999;
    --acc: #ccc;
}
.ribbon button:disabled svg {
    color: #ccc;
}
.ribbon-more {
    align-self: start;
    margin: 20px 0 0 -8px;
    color: #333;
}
.ribbon-more svg {
    width: 4px;
    height: 4px;
}

/* sidebar */
.workspace {
    flex: 1;
    display: flex;
    min-height: 0;
}
.sidebar {
    width: 123px;
    flex: none;
    display: flex;
    flex-direction: column;
    padding: 4px 0 0 4px;
}
.side-tabs {
    display: flex;
    height: 13px;
}
.side-tab {
    font-size: 8px;
    width: 37px;
    color: #dfe8ee;
    background: #3f5d76;
    border-radius: 2px 2px 0 0;
}
.side-tab.active {
    font-weight: 700;
    color: #fff;
    background: var(--blue);
}
.collapse {
    margin-left: auto;
    padding: 0 6px 4px 0;
    color: #fff;
}
.collapse svg {
    width: 5px;
    height: 5px;
}
.side-modes {
    display: flex;
    height: 16px;
    background: var(--blue);
    color: #fff;
    padding-left: 3px;
    gap: 3px;
}
.side-modes button {
    width: 21px;
    display: grid;
    place-items: center;
    border-bottom: 1px solid transparent;
}
.side-modes .active {
    border-bottom-color: #19a9e5;
}
.side-modes svg {
    width: 11px;
    height: 11px;
}
.tree-box {
    flex: 1;
    display: flex;
    min-height: 0;
    background: #fcfcfc;
    overflow: hidden;
}
.tree {
    flex: 1;
    min-width: 0;
    display: grid;
    grid-template-rows: repeat(35, 1fr);
    margin: 1px 0 -7px;
    color: #4a4550;
    background: linear-gradient(#ddd, #ddd) no-repeat 5px 0 / 1px 100%;
}
.tree li {
    display: flex;
    align-items: center;
    white-space: nowrap;
    overflow: hidden;
    min-height: 0;
    padding-left: 3px;
}
.tree svg {
    color: #1c4262;
    margin: 0 3px 0 4px;
}
.tree .tog,
.nav-tree .tog {
    width: 5px;
    height: 5px;
    margin: 0;
    color: #777;
    background: #fcfcfc;
}
.tree i {
    width: 5px;
    height: 1px;
    flex: none;
    margin-left: 3px;
    margin-right: -3px;
    background: #ddd;
}
.tree .sub {
    padding-left: 22px;
    background:
        linear-gradient(#ddd, #ddd) no-repeat 16px 0 / 1px 100%,
        linear-gradient(#ddd, #ddd) no-repeat 16px 50% / 5px 1px;
}

/* scrollbars */
.hscroll, .vscroll {
    display: flex;
    align-items: center;
    flex: none;
    background: #f0f0f0;
    color: #666;
}
.hscroll {
    height: 9px;
    padding: 0 3px;
    gap: 3px;
    background: #e8e9ea;
}
.hscroll svg, .vscroll svg {
    width: 4px;
    height: 4px;
}
.track {
    flex: 1;
    display: flex;
    align-self: stretch;
}
.thumb {
    background: #cdcdcd;
}
.hscroll .thumb {
    margin: 1px 0;
}
.vscroll {
    flex-direction: column;
    width: 8px;
    padding: 3px 0;
    gap: 3px;
}
.vscroll .track {
    flex-direction: column;
}
.vscroll .thumb {
    width: 8px;
}
.side-v {
    width: 9px;
    margin-right: 1px;
}
.side-v .track {
    justify-content: flex-end;
}
.side-v .thumb {
    height: 48%;
    margin-bottom: 10px;
}
.side-h .thumb { width: 68%; }
.over-h .thumb { width: 18%; }
.ref-h .thumb { width: 29%; }
.side-icons {
    height: 27px;
    display: flex;
    align-items: center;
    gap: 10px;
    color: #e8eef2;
}
.side-icons svg {
    width: 11px;
    height: 11px;
    display: block;
}

/* splitters */
.split-v {
    width: 2px;
    flex: none;
    display: flex;
    align-items: center;
    background: #e4e6e8;
}
.split-v.dark {
    width: 4px;
    background: var(--navy);
    border-right: 1px solid #003f68;
}
.split-v span {
    width: 2px;
    height: 10px;
    background: repeating-linear-gradient(#9aa4ac 0 1px, transparent 1px 2px);
}
.split-h {
    height: 3px;
    flex: none;
    background: #e4e6e8;
}
.split-h.thin {
    height: 2px;
}
.split-h span {
    display: block;
    width: 11px;
    height: 2px;
    margin: 0 auto;
    background: repeating-linear-gradient(90deg, #8a8f94 0 1px, transparent 1px 2px);
}

/* main toolbar */
.main {
    flex: 1;
    min-width: 0;
    display: flex;
    flex-direction: column;
    border-left: 1px solid #b9c4cc;
}
.toolbar {
    height: 18px;
    flex: none;
    display: flex;
    align-items: center;
    color: #f0f4f7;
    font-weight: 600;
    background: var(--navy);
    margin-left: -1px;
    padding-left: 1px;
}
.toolbar button {
    display: flex;
    align-items: center;
    gap: 4px;
    white-space: nowrap;
    margin-right: 10px;
}
.toolbar button:disabled {
    color: #2b506d;
}
.search {
    display: flex;
    height: 11px;
}
.search input {
    width: 106px;
    background: #fff;
    color: #222;
    padding: 0 3px;
}
.toolbar .search button {
    width: 11px;
    margin: 0;
    justify-content: center;
    background: #12a5e2;
}
.advanced {
    margin: 0 6px 0 4px;
    color: #0b87bf;
    white-space: nowrap;
}
.sep {
    width: 1px;
    height: 7px;
    margin-right: 8px;
    background: #5d7a90;
}
.toolbar button + .sep {
    margin-left: -3px;
}
.toolbar .new {
    height: 11px;
    padding: 0 3px 0 2px;
    background: #0b8f22;
}
.toolbar .view {
    margin-left: auto;
}
.pager {
    display: flex;
    gap: 4px;
    padding-right: 3px;
}
.toolbar .pager button {
    margin: 0;
    padding: 0 1px;
}
.pager svg {
    width: 6px;
    height: 6px;
}
.doc-tabs {
    height: 16px;
    flex: none;
    display: flex;
    justify-content: space-between;
    background: var(--navy);
}
.doc-tab {
    padding: 3px 4px 2px;
    color: #eaf4f9;
    background: var(--blue);
    border-radius: 2px 2px 0 0;
}
.doc-tab span {
    display: block;
    padding: 0 5px 1px;
    border-bottom: 2px solid #11a0dc;
}
.doc-close {
    color: #fff;
    padding-right: 1px;
}
.doc-close svg {
    width: 6px;
    height: 6px;
}

/* panels */
.panel {
    display: flex;
    flex-direction: column;
    min-height: 0;
    min-width: 0;
    background: #fcfcfc;
    font-family: "DejaVu Sans Condensed", "DejaVu Sans", sans-serif;
}
.panel h2 {
    display: flex;
    align-items: center;
    gap: 5px;
    height: 10px;
    flex: none;
    padding: 0 4px 0 1px;
    font: 400 6px/10px "Open Sans", sans-serif;
    color: #e4f1f8;
    background: var(--blue);
}
.panel h2 svg {
    width: 6px;
    height: 6px;
}
.panel h2 svg:first-of-type {
    margin-left: auto;
}
.overview {
    flex: 86 1 0;
}
.middle {
    flex: 205 1 0;
    display: flex;
    min-height: 0;
}
.references {
    flex: 147 1 0;
    border-bottom: 1px solid #b9c4cc;
}
.details {
    flex: 708 1 0;
}
.navigation {
    flex: 187 1 0;
}

/* data grids */
.grid-wrap {
    flex: 1;
    min-height: 0;
    overflow: hidden;
}
.grid {
    width: 0;
    table-layout: fixed;
    border-collapse: collapse;
}
.w10 { width: 10px; }
.w14 { width: 14px; }
.w35 { width: 35px; }
.w40 { width: 40px; }
.w42 { width: 42px; }
.w43 { width: 43px; }
.w53 { width: 53px; }
.w54 { width: 54px; }
.w64 { width: 64px; }
.w80 { width: 80px; }
.w86 { width: 86px; }
.w119 { width: 119px; }
.w160 { width: 160px; }
.grid th {
    height: 16px;
    padding: 1px 0 0;
    font-weight: 400;
    color: #444;
    background: #e8e9ea;
    border-right: 1px solid #cfd0d1;
    white-space: nowrap;
    overflow: hidden;
}
.grid th div {
    display: flex;
    align-items: center;
}
.grid th span {
    flex: 1;
}
.grid th div svg {
    width: 6px;
    height: 6px;
    margin-right: 2px;
    color: #82878c;
}
.grid svg.fields {
    display: block;
    margin: 0 auto;
}
.grid td {
    height: 10px;
    padding: 1px 1px 0;
    line-height: 8px;
    white-space: nowrap;
    overflow: hidden;
    border-right: 1px solid #a9b5c0;
}
.grid td.marker {
    padding: 0 3px;
    color: #111;
    background: #fcfcfc;
}
.grid .marker svg {
    display: block;
    width: 5px;
    height: 5px;
}
.grid td.mid {
    text-align: center;
}
.grid td input {
    appearance: none;
    display: block;
    width: 6px;
    height: 6px;
    margin: 0 auto;
    background: #fff;
}
.grid td.num {
    text-align: right;
}
.over-grid tbody tr {
    background: #b4c1cc;
    border-top: 1px solid #a8948c;
    border-bottom: 1px solid #a8948c;
    color: #2c2c2c;
}
.grid.ref-grid th {
    height: 14px;
}
.ref-grid tbody tr {
    background: #e7e7e7;
    border-bottom: 1px solid #f6f6f6;
    color: #808080;
}
.ref-grid td {
    border-color: #d8d8d8;
}
.look div {
    display: flex;
    align-items: center;
    justify-content: space-between;
}
.look button {
    display: flex;
    margin: 0 -1px 0 auto;
    background: #fff;
    color: #777;
}
.look button:disabled {
    color: #ddd;
}

/* tab strips */
.tabs {
    display: flex;
    flex: none;
}
.tabs button {
    white-space: nowrap;
}
.tabs .strong {
    font-weight: 700;
    color: #222;
}
.tabs button:disabled {
    color: #999;
}
.detail-tabs {
    gap: 9px;
    padding: 4px 2px 6px;
}
.detail-tabs button {
    padding: 0 4px;
    border-bottom: 1px solid transparent;
}
.tabs .active {
    color: #1a7fae;
    font-weight: 700;
    border-bottom-color: #31aee2;
}
.ref-tabs {
    height: 15px;
    padding: 3px 0 1px 5px;
    border-bottom: 1px solid #e4e4e4;
}
.ref-tabs button {
    margin: 0 10px;
    border-bottom: 1px solid transparent;
}
.ref-tabs .strong {
    margin: 0 6px;
}
.tabs.ref-tabs .active {
    margin-left: 0;
    color: #1a7fae;
    border-bottom-color: #31aee2;
}

/* details form */
.form-area {
    flex: 1;
    display: flex;
    min-height: 0;
    overflow: hidden;
    border-bottom: 1px solid #ddd;
}
.form {
    flex: 1;
    min-width: 0;
    padding-left: 1px;
}
.box {
    width: 596px;
    display: grid;
    grid-template-columns: 56px 54px 12px 56px 64px 9px 56px 54px 12px 72px 54px 1fr;
    grid-auto-rows: 14px;
    align-items: center;
    padding: 2px 0 1px 4px;
    border: 1px solid #e6e6e6;
}
.box.costs {
    margin-top: 4px;
    padding-top: 4px;
    padding-bottom: 4px;
    border-bottom: 0;
}
.box .c1 { grid-column-start: 1; }
.box .c3 { grid-column-start: 4; }
.box .c5 { grid-column-start: 7; }
.box .c7 { grid-column-start: 10; }
.box .c8 { grid-column-start: 11; }
.box .c9 { grid-column-start: 12; }
.box .long { grid-column: 2 / 6; }
.box .c3.span2 { grid-column: 4 / 6; }
.box .c7.span2 { grid-column: 10 / 12; }
.box .wide { grid-column: 10 / 12; }
.box .c8, .box .c9 {
    margin-left: 4px;
}
.box label, .box .after {
    white-space: nowrap;
}
.box .after {
    padding-left: 4px;
    width: 12px;
}
.box input, .pick select {
    width: 100%;
    height: 12px;
    padding: 0 1px;
    background: #efefef;
    border: 1px solid #b4b4b4;
    color: #333;
}
.box input.soft {
    border-color: #ccc;
}
.box input.num {
    text-align: right;
    padding-right: 2px;
}
.box > button {
    height: 12px;
    width: 53px;
    padding: 0 3px;
    text-align: left;
    color: #777;
    background: #cbcbcb;
}
.box > button.short {
    width: 50px;
}
.pick {
    display: grid;
    align-items: center;
    padding-left: 3px;
}
.pick select {
    appearance: none;
    grid-area: 1 / 1;
    background: #cbcbcb;
    border-color: #cbcbcb;
    color: #8c8c8c;
    opacity: 1;
}
.pick svg {
    grid-area: 1 / 1;
    justify-self: end;
    width: 5px;
    height: 5px;
    margin-right: 3px;
    color: #999;
    z-index: 1;
}
.date {
    display: flex;
}
.date input {
    flex: 1;
    border-color: #ccc;
    padding-left: 2px;
}
.date button {
    flex: 0 0 11px;
    display: grid;
    place-items: center;
    background: #ddd;
    border: 1px solid #aaa;
}
.date svg {
    width: 5px;
    height: 5px;
}
.box .check {
    display: flex;
    align-items: center;
    gap: 3px;
    color: #777;
}
.box .check input {
    appearance: none;
    display: grid;
    place-items: center;
    flex: none;
    width: 8px;
    height: 8px;
    background: #fff;
    border: 1px solid #d4d4d4;
}
.box .check input:checked::before {
    content: "";
    width: 4px;
    height: 2px;
    border: solid #999;
    border-width: 0 0 1px 1px;
    transform: rotate(-45deg);
}
.form-v .thumb {
    flex: 1;
}
.form-v {
    margin: -5px 1px 0 0;
    padding-bottom: 2px;
}

/* navigation tree */
.nav-box {
    flex: 1;
    margin: 1px 0 0;
    padding-top: 1px;
    border: 1px solid #a0a0a0;
    background: #fff;
    overflow: hidden;
}
.nav-tree {
    height: 43px;
    display: grid;
    grid-auto-rows: 1fr;
}
.nav-tree li {
    display: flex;
    align-items: center;
    min-height: 0;
    padding-left: 3px;
    white-space: nowrap;
}
.nav-tree svg {
    width: 7px;
    height: 7px;
    color: #1c4262;
    margin: 0 3px 0 4px;
}
.nav-tree .l2 {
    padding-left: 13px;
}
.nav-tree .l2 .tog {
    margin-right: 3px;
}
.nav-tree .l3 {
    padding-left: 23px;
}
.nav-tree .strong {
    font-weight: 700;
    color: #222;
}

/* references toolbar */
.ref-tools {
    display: flex;
    height: 13px;
    flex: none;
    padding-left: 2px;
    font-family: "Open Sans", "Noto Sans", sans-serif;
    color: #2f4f68;
}
.ref-tools > button {
    display: flex;
    align-items: center;
    gap: 5px;
    padding: 0 4px;
    white-space: nowrap;
}
.ref-tools > button + button {
    border-left: 1px solid #e6e6e6;
}
.ref-tools svg {
    color: #1c4262;
}
.ref-tools button:disabled,
.ref-tools button:disabled svg {
    color: #aaa;
    --acc: #bbb;
}
.mini {
    display: flex;
    align-items: center;
    gap: 3px;
    padding-right: 5px;
}
.mini button {
    display: flex;
}
.mini svg {
    color: #888;
}
.mini .faint svg {
    color: #aaa;
}
```
